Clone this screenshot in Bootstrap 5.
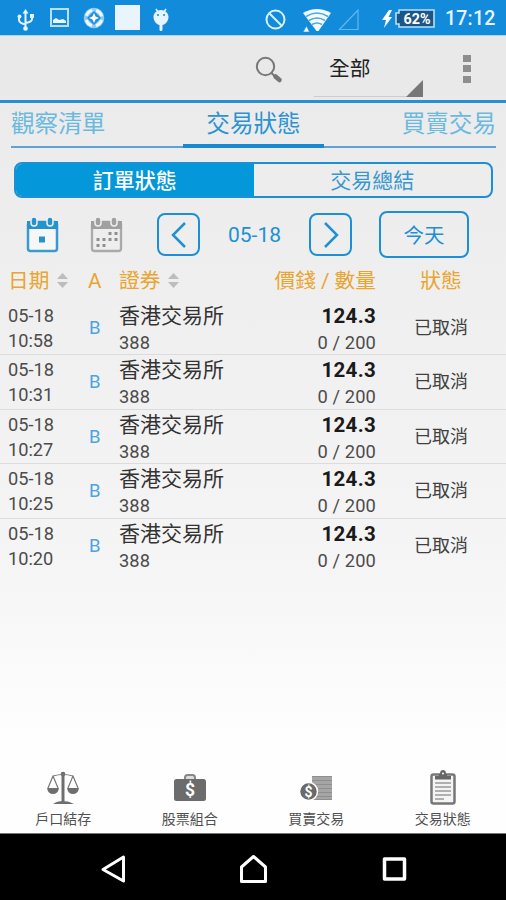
<!DOCTYPE html>
<html lang="zh-Hant">
<head>
<meta charset="utf-8">
<meta name="viewport" content="width=device-width, initial-scale=1">
<title>交易狀態</title>
<link href="https://cdn.jsdelivr.net/npm/bootstrap@5.3.0/dist/css/bootstrap.min.css" rel="stylesheet">
<style>
:root{--blue:#1c90d6}
body{width:506px;height:900px;overflow:hidden;font-family:Roboto,"Noto Sans CJK TC",sans-serif;color:#333;background:linear-gradient(#ebebeb 100px,#efefef 300px,#f5f5f5 560px,#fefefe 740px)}
svg{display:block;flex:none}
svg text{font-family:Roboto,sans-serif;font-weight:700}
.statusbar{height:36px;background:#128cda;border-bottom:1px solid #a9d5f1;padding-left:16px;color:#e6f4ff}
.clock{font-size:19.5px;line-height:36px;font-weight:500;letter-spacing:.2px;padding-top:3px}
.actionbar{height:67px;background:#e9e9e9;border-bottom:3px solid #2590d3;padding-left:255px}
.spinner{width:109px;height:38px;margin-left:31px;margin-top:20px;border-bottom:1px solid #ccc;padding-left:15px;font-size:20.7px;line-height:20px;color:#222}
.spinner svg{margin-top:21px}
.tabs{height:45px;margin:0 10px 0 11px;font-size:23.6px;line-height:43px;border-bottom:2px solid #5ba3d8;color:#6bb9de}
.tabs .on{width:141px;height:45px;color:#2b93d1;border-bottom:4px solid #1789d2}
.tabs .side{width:172px}
.segment{height:36px;margin:14px 13px 0 14px;border:2px solid var(--blue);border-radius:8px;overflow:hidden;font-size:21px;line-height:34px;color:#3797d0}
.segment .on{background:#0497da;color:#fff;font-weight:500}
.controls{height:47px;margin-top:13px;padding-left:26px;color:#2190d3}
.sq{width:43px;height:43px;border:2px solid var(--blue);border-radius:8px}
.today{width:90px;height:47px;border:2px solid var(--blue);border-radius:8px;font-size:20.5px;line-height:46px}
.day{width:109px;font-size:21px;padding-top:3px}
.cols{display:grid;grid-template-columns:80px 31px 150px 107px 130px;padding-left:8px}
.heads{height:43px;font-size:20.7px;line-height:44px;padding-top:1px;color:#e9a52f}
.order{height:54.4px;border-bottom:1px solid #dcdcdc}
.order:last-child{border-bottom:0}
.when{font-size:18.2px;line-height:25px;padding-top:2px;color:#4c4c4c}
.side-b{font-size:18.5px;line-height:54px;color:#4ba3e3;padding-left:1px}
.stock{font-size:21px;line-height:26px;padding-top:2px;color:#333}
.sub{font-size:18.3px;line-height:26px;padding-top:1px;color:#4c4c4c;letter-spacing:.1px}
.price{font-size:20.5px;line-height:26px;padding-top:2px;font-weight:700;color:#1a1a1a;letter-spacing:.3px}
.state{font-size:18px;line-height:54px;color:#404040}
.bottomnav{height:72px;color:#505050;font-size:14px;line-height:20px;background:#fefefe}
.bottomnav svg{margin:9px auto 3px}
.softkeys{height:67px;background:#000;border-top:1px solid #777;padding:3px 0 0 100px}
</style>
</head>
<body class="d-flex flex-column">
<header>
<div class="statusbar d-flex align-items-center">
 <svg class="mt-1" width="18" height="24" viewBox="0 0 18 24" fill="none" stroke="#e6f4ff" stroke-width="2"><path d="M9.500 4V20M3 9v3q0 3 6.500 4.500M16 8v3q0 3-6.500 4"/><path d="M9.500 1l3 4.500h-6z" fill="#e6f4ff" stroke="none"/><circle cx="9.500" cy="20.500" r="2.300" fill="#e6f4ff" stroke="none"/><circle cx="3.500" cy="8.500" r="2" fill="#e6f4ff" stroke="none"/><path d="M14 6h4v4h-4z" fill="#e6f4ff" stroke="none"/></svg>
 <svg class="ms-3" width="19" height="19" viewBox="0 0 19 19"><path d="M1 1h17v17H1z" fill="none" stroke="#b9e0fa" stroke-width="2"/><path d="M3 15v-3l3-2 3 2 4-1 3 2v2z" fill="#eef8ff"/></svg>
 <svg style="margin-left:14px" width="22" height="22" viewBox="0 0 22 22"><circle cx="11" cy="11" r="10.300" fill="#8dcbf3"/><circle cx="11" cy="11" r="7.800" fill="none" stroke="#f0f9ff" stroke-width="3" stroke-dasharray="8.250 4" stroke-dashoffset="-2"/><path d="M11 4l7 7-7 7-7-7z" fill="#208ed8"/><path d="M11 6l1.600 3.400L16 11l-3.400 1.600L11 16l-1.600-3.400L6 11l3.400-1.600z" fill="#fff"/></svg>
 <svg style="margin-left:10px" width="25" height="25"><path fill="#e9f4fd" d="M0 0h25v25H0z"/></svg>
 <svg class="mt-1" style="margin-left:13px" width="16" height="24" viewBox="0 0 16 24"><path d="M3 1l2 3M13 1l-2 3" stroke="#e6f4ff" stroke-width="1.500"/><path d="M8 2c4 0 7.500 3 7.500 7S12 17 9.500 17v4.500q0 1.500-1.500 1.500t-1.500-1.500V17C4 17 .5 13 .5 9S4 2 8 2z" fill="#e6f4ff"/><circle cx="5" cy="7" r="1" fill="#128cda"/><circle cx="11" cy="7" r="1" fill="#128cda"/></svg>
 <svg class="mt-1" style="margin-left:96px" width="21" height="21" viewBox="0 0 21 21" fill="none" stroke="#d8effd" stroke-width="2"><circle cx="10.500" cy="10.500" r="9"/><path d="M4 4l13 13"/></svg>
 <svg class="mt-1" style="margin-left:17px" width="28" height="24" viewBox="0 0 28 24"><path d="M0 5Q14-3 28 5L15.500 23h-2z" fill="#f2faff"/><path d="M3 8.500q11-7 22 0M6 12.500q8-5 16 0M9 16.500q5-3 10 0" fill="none" stroke="#4ba7e2" stroke-width="1.500"/><path d="M0 24l3.500-6 3 6z" fill="#fff" stroke="#128cda" stroke-width=".6"/></svg>
 <svg class="mt-1" style="margin-left:7px" width="21" height="22" viewBox="0 0 21 22"><path d="M20 1v19.500H1.500z" fill="none" stroke="#63b6ec" stroke-width="1.200"/></svg>
 <svg class="mt-1" style="margin-left:22px" width="54" height="22" viewBox="0 0 54 22"><path d="M8 1L1 11h4L3 19l8-11H7.500L11 1z" fill="#fff"/><path d="M18 1h35v17H18v-3h-3V4h3z" fill="#1b5686" stroke="#b9def6" stroke-width="1.600"/><text x="36" y="14.700" text-anchor="middle" font-size="14.500" fill="#fff" textLength="27" lengthAdjust="spacingAndGlyphs">62%</text></svg>
 <span class="clock" style="margin-left:10px">17:12</span>
</div>
<div class="actionbar d-flex align-items-center">
 <svg class="mt-1" width="28" height="28" viewBox="0 0 28 28" fill="none" stroke="#777"><circle cx="10.500" cy="10.500" r="8.700" stroke-width="2"/><path d="M16.500 17l4 4" stroke-width="2"/><path d="M20.500 20.500l4 3.500" stroke-width="4.500" stroke-linecap="round"/></svg>
 <div class="spinner d-flex justify-content-between"><span>全部</span><svg width="17" height="17"><path d="M17 0v17H0z" fill="#777"/></svg></div>
 <svg style="margin-left:40px;margin-top:2px" width="9" height="30"><path d="M0 1h8v7H0zM0 11h8v7H0zM0 22h8v7H0z" fill="#8e8e8e"/></svg>
</div>
</header>
<nav class="tabs d-flex"><div class="side">觀察清單</div><div class="on text-center">交易狀態</div><div class="side text-end">買賣交易</div></nav>
<div class="segment d-flex text-center"><div class="col-6 on">訂單狀態</div><div class="col-6">交易總結</div></div>
<div class="controls d-flex align-items-center">
 <svg width="33" height="37" viewBox="0 0 33 37"><rect x="2" y="6" width="29" height="29" rx="2.500" fill="#fff" fill-opacity=".5" stroke="#389bcd" stroke-width="2.500"/><path d="M1 5h31v8H1z" fill="#2594cd"/><g fill="#2594cd" stroke="#efefef" stroke-width="1.500"><rect x="5" y="1" width="6" height="9" rx="3"/><rect x="21" y="1" width="6" height="9" rx="3"/></g><path d="M13 20.500h6v6h-6z" fill="#2594cd"/></svg>
 <svg style="margin-left:31px" width="33" height="37" viewBox="0 0 33 37"><rect x="2" y="6" width="29" height="29" rx="2.500" fill="none" stroke="#aaa" stroke-width="2.300"/><path d="M1 5h31v8H1z" fill="#a0a0a0"/><g fill="#a0a0a0" stroke="#efefef" stroke-width="1.500"><rect x="5" y="1" width="6" height="9" rx="3"/><rect x="21" y="1" width="6" height="9" rx="3"/></g><path d="M18.500 17.500h9M6.500 23.500h21M6.500 29.500h9" stroke="#8f8f8f" stroke-width="3" stroke-dasharray="3 3"/></svg>
 <div class="sq d-flex align-items-center justify-content-center" style="margin-left:34px"><svg width="18" height="28" viewBox="0 0 18 28"><path d="M15 2L3 14l12 12" fill="none" stroke="#2190d3" stroke-width="2.500"/></svg></div>
 <div class="day text-center">05-18</div>
 <div class="sq d-flex align-items-center justify-content-center"><svg width="18" height="28" viewBox="0 0 18 28"><path d="M3 2l12 12L3 26" fill="none" stroke="#2190d3" stroke-width="2.500"/></svg></div>
 <div class="today text-center" style="margin-left:27px">今天</div>
</div>
<div class="cols heads">
 <div class="d-flex align-items-center">日期<svg class="ms-2" width="11" height="16"><path d="M0 6l5.500-6L11 6zM0 9h11l-5.500 6z" fill="#bdbdbd"/></svg></div><div>A</div>
 <div class="d-flex align-items-center">證券<svg class="ms-2" width="11" height="16"><path d="M0 6l5.500-6L11 6zM0 9h11l-5.500 6z" fill="#bdbdbd"/></svg></div><div class="text-end text-nowrap">價錢 / 數量</div><div class="text-center">狀態</div>
</div>
<main class="flex-grow-1">
 <div class="cols order"><div class="when">05-18<br>10:58</div><div class="side-b">B</div><div><div class="stock">香港交易所</div><div class="sub">388</div></div><div class="text-end"><div class="price">124.3</div><div class="sub">0 / 200</div></div><div class="state text-center">已取消</div></div>
 <div class="cols order"><div class="when">05-18<br>10:31</div><div class="side-b">B</div><div><div class="stock">香港交易所</div><div class="sub">388</div></div><div class="text-end"><div class="price">124.3</div><div class="sub">0 / 200</div></div><div class="state text-center">已取消</div></div>
 <div class="cols order"><div class="when">05-18<br>10:27</div><div class="side-b">B</div><div><div class="stock">香港交易所</div><div class="sub">388</div></div><div class="text-end"><div class="price">124.3</div><div class="sub">0 / 200</div></div><div class="state text-center">已取消</div></div>
 <div class="cols order"><div class="when">05-18<br>10:25</div><div class="side-b">B</div><div><div class="stock">香港交易所</div><div class="sub">388</div></div><div class="text-end"><div class="price">124.3</div><div class="sub">0 / 200</div></div><div class="state text-center">已取消</div></div>
 <div class="cols order"><div class="when">05-18<br>10:20</div><div class="side-b">B</div><div><div class="stock">香港交易所</div><div class="sub">388</div></div><div class="text-end"><div class="price">124.3</div><div class="sub">0 / 200</div></div><div class="state text-center">已取消</div></div>
</main>
<nav class="bottomnav row g-0 text-center">
 <div class="col-3"><svg width="34" height="36" viewBox="0 0 34 36" fill="#6e6e6e"><path d="M15.500 3h3v29h-3zM7 34q4-3 10-3t11 3z"/><circle cx="17" cy="4" r="2.300"/><path d="M17 4.500q-5 0-10 1.500L2 18M7 6l5 12M17 4.500q5 0 10 1.500l-5 12M27 6l5 12" fill="none" stroke="#777" stroke-width="1.200"/><path d="M1 18h12q-1 6-6 6t-6-6zM21 18h12q-1 6-6 6t-6-6z"/></svg>戶口結存</div>
 <div class="col-3"><svg width="34" height="36" viewBox="0 0 34 36"><path d="M12 9V7.500Q12 5 14.500 5h5Q22 5 22 7.500V9" fill="#ddd" stroke="#888" stroke-width="2"/><rect x="1" y="9" width="32" height="22" rx="2.500" fill="#6c6c6c"/><text x="17" y="26" text-anchor="middle" font-size="17.500" fill="#fff">$</text></svg>股票組合</div>
 <div class="col-3"><svg width="34" height="36" viewBox="0 0 34 36"><path d="M13 6h20v24H13z" fill="#a5a5a5"/><path d="M13 6.500h20M13 10.500h20M13 14.500h20M13 18.500h20M13 22.500h20M13 26.500h20M13 29.500h20" stroke="#8e8e8e" stroke-width="1.200"/><circle cx="9.500" cy="21.500" r="9" fill="#6a6a6a" stroke="#fefefe" stroke-width="1.500"/><text x="9.500" y="26.500" text-anchor="middle" font-size="14" fill="#fff">$</text></svg>買賣交易</div>
 <div class="col-3"><svg width="34" height="36" viewBox="0 0 34 36"><rect x="5.500" y="4.500" width="23" height="29" rx="2" fill="#f4f4f4" stroke="#777" stroke-width="2.500"/><path d="M9 9.500V6h4V4h1q0-4 3-4t3 4h1v2h4v3.500z" fill="#666"/><circle cx="17" cy="3.500" r="1" fill="#fff"/><path d="M9 13h16M9 17h16M9 21h16M9 25h16M9 29h9" stroke="#999" stroke-width="1.300"/></svg>交易狀態</div>
</nav>
<footer class="softkeys d-flex align-items-center">
 <svg width="26" height="30" viewBox="0 0 26 30" fill="none" stroke="#fff" stroke-width="3" stroke-linejoin="round"><path d="M23.500 3v24L3 15.500z"/></svg>
 <svg style="margin-left:113px" width="29" height="30" viewBox="0 0 29 30" fill="none" stroke="#fff" stroke-width="3" stroke-linejoin="round"><path d="M2.500 13L14.500 2.500 26.500 13v14.500h-24z"/></svg>
 <svg style="margin-left:114px" width="25" height="26" viewBox="0 0 25 26" fill="none" stroke="#fff" stroke-width="3.500" stroke-linejoin="round"><path d="M2.500 3h20v20h-20z"/></svg>
</footer>
<script src="https://cdn.jsdelivr.net/npm/bootstrap@5.3.0/dist/js/bootstrap.bundle.min.js"></script>
</body>
</html>
